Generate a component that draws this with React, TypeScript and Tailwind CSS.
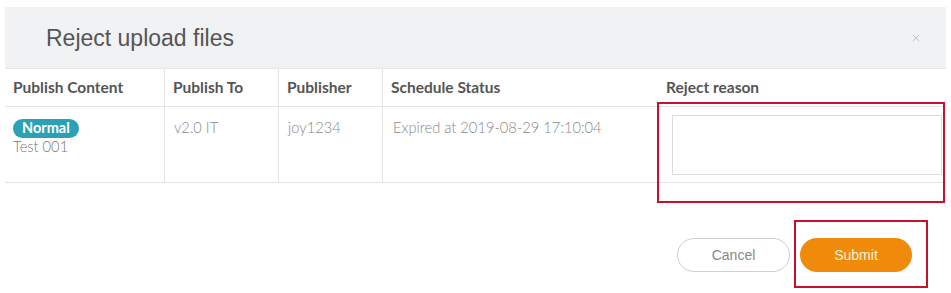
import { X } from "lucide-react";

const columns = ["Publish Content", "Publish To", "Publisher", "Schedule Status", "Reject reason"];

export default function App() {
    return (
        <div className="relative w-[951px] h-[293px] bg-white font-['Lato','Liberation_Sans',sans-serif] overflow-hidden">
            <div className="pt-[7px] px-[5px]">
                {/* Modal header */}
                <div className="h-[62px] bg-[#f1f2f3] flex items-center justify-between pl-[41px] pr-[24px] border-b border-[#e6e6e6]">
                    <h2 className="text-[23px] text-[#555] font-['Liberation_Sans',sans-serif] leading-none pt-[2px]">Reject upload files</h2>
                    <X className="h-[12px] w-[12px] text-[#c4c4c4]" strokeWidth={2} />
                </div>

                {/* Table */}
                <div className="grid grid-cols-[159px_114px_104px_274px_290px]">
                    {columns.map((col, i) => (
                        <div
                            key={col}
                            className={`h-[38px] flex items-center pl-[8px] text-[15.5px] font-bold text-[#555] border-b border-[#e3e3e3] ${i > 0 && i < 4 ? "border-l" : ""} ${i === 4 ? "pl-[10px]" : ""}`}
                        >
                            {col}
                        </div>
                    ))}

                    <div className="h-[76px] pl-[8px] pt-[8px] border-b border-[#e3e3e3]">
                        <span className="inline-flex items-center h-[19px] px-[9px] rounded-full bg-[#2aa1b4] text-white text-[14.5px] font-bold leading-none">
                            Normal
                        </span>
                        <div className="text-[14.7px] text-[#777] font-light leading-[17px] -mt-[1px]">Test 001</div>
                    </div>
                    <div className="h-[76px] pl-[9px] pt-[9px] border-l border-b border-[#e3e3e3] text-[14.7px] text-[#888] font-light">
                        v2.0 IT
                    </div>
                    <div className="h-[76px] pl-[9px] pt-[9px] border-l border-b border-[#e3e3e3] text-[14.7px] text-[#888] font-light">
                        joy1234
                    </div>
                    <div className="h-[76px] pl-[10px] pt-[9px] border-l border-b border-[#e3e3e3] text-[14.7px] text-[#888] font-light">
                        Expired at 2019-08-29 17:10:04
                    </div>
                    <div className="h-[76px] pl-[16px] pr-[4px] pt-[8px] border-b border-[#e3e3e3]">
                        <textarea className="w-full h-[60px] border border-[#dcdcdc] resize-none outline-none" />
                    </div>
                </div>

                {/* Footer buttons */}
                <div className="flex justify-end gap-[10px] pt-[55px] pr-[34px]">
                    <button className="w-[113px] h-[34px] rounded-full border border-[#cfcfcf] bg-white text-[14px] text-[#888] font-['Liberation_Sans',sans-serif]">
                        Cancel
                    </button>
                    <button className="w-[112px] h-[34px] rounded-full bg-[#f08a0a] text-[14px] text-[#fff3dc] font-['Liberation_Sans',sans-serif]">
                        Submit
                    </button>
                </div>
            </div>

            {/* Annotation boxes */}
            <div className="absolute left-[657px] top-[102px] w-[288px] h-[101px] border-2 border-[#c8102e]" />
            <div className="absolute left-[794px] top-[220px] w-[134px] h-[68px] border-2 border-[#c8102e]" />
        </div>
    );
}
